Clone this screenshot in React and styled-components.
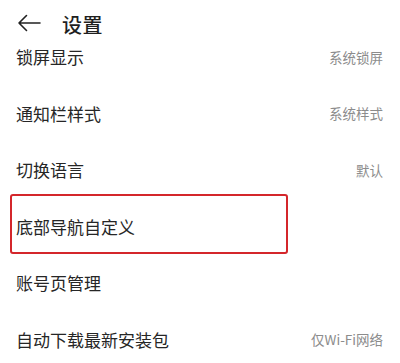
import React from 'react';
import styled, { createGlobalStyle } from 'styled-components';

const GlobalStyle = createGlobalStyle`
  html, body {
    margin: 0;
    padding: 0;
    background: #fff;
  }
  body {
    font-family: "Noto Sans CJK SC", "Noto Sans", sans-serif;
  }
`;

// first row is scrolled half under the header
const settings = [
  { label: '锁屏显示', value: '系统锁屏', partial: true },
  { label: '通知栏样式', value: '系统样式' },
  { label: '切换语言', value: '默认' },
  { label: '底部导航自定义', marked: true },
  { label: '账号页管理' },
  { label: '自动下载最新安装包', value: '仅Wi-Fi网络' },
];

const Page = () => {
  return (
    <Screen>
      <GlobalStyle />
      <Header>
        <BackButton>
          <svg width="24" height="18" viewBox="0 0 24 18" fill="none">
            <path d="M23 9H2M9.5 1.5L2 9l7.5 7.5" stroke="#222" strokeWidth="1.6" strokeLinecap="round" strokeLinejoin="round" />
          </svg>
        </BackButton>
        <Title>设置</Title>
      </Header>
      <List>
        {settings.map((item) => (
          <Row key={item.label} $marked={item.marked} $partial={item.partial}>
            <Label>{item.label}</Label>
            {item.value && <Value>{item.value}</Value>}
          </Row>
        ))}
      </List>
    </Screen>
  );
};

const Screen = styled.div`
  width: 400px;
  height: 363px;
  overflow: hidden;
  background: #fff;
`;

const Header = styled.div`
  height: 47px;
  display: flex;
  align-items: center;
  padding: 0 0 0 17px;
  box-sizing: border-box;
  background: #fff;
`;

const BackButton = styled.div`
  display: flex;
  align-items: center;
  width: 24px;
  height: 18px;
  margin-top: -1px;
`;

const Title = styled.div`
  margin-left: 21px;
  font-size: 20px;
  font-weight: 500;
  color: #1f1f1f;
  letter-spacing: 0.5px;
  margin-top: 2px;
`;

const List = styled.div`
  display: flex;
  flex-direction: column;
`;

const Row = styled.div`
  position: relative;
  height: ${({ $partial }) => ($partial ? '38.3px' : '56.6px')};
  padding: ${({ $partial }) => ($partial ? '0 17px 18.3px 16px' : '0 17px 0 16px')};
  display: flex;
  align-items: center;
  justify-content: space-between;
  box-sizing: border-box;

  ${({ $marked }) => $marked && `
    &::after {
      content: '';
      position: absolute;
      left: 10px;
      top: -4px;
      width: 278px;
      height: 60px;
      box-sizing: border-box;
      border: 2px solid #d4262b;
      border-radius: 3px;
    }
  `}
`;

const Label = styled.div`
  font-size: 17px;
  line-height: 18px;
  color: #262626;
`;

const Value = styled.div`
  font-size: 13.5px;
  line-height: 15px;
  color: #8c8c8c;
`;

export default Page;
